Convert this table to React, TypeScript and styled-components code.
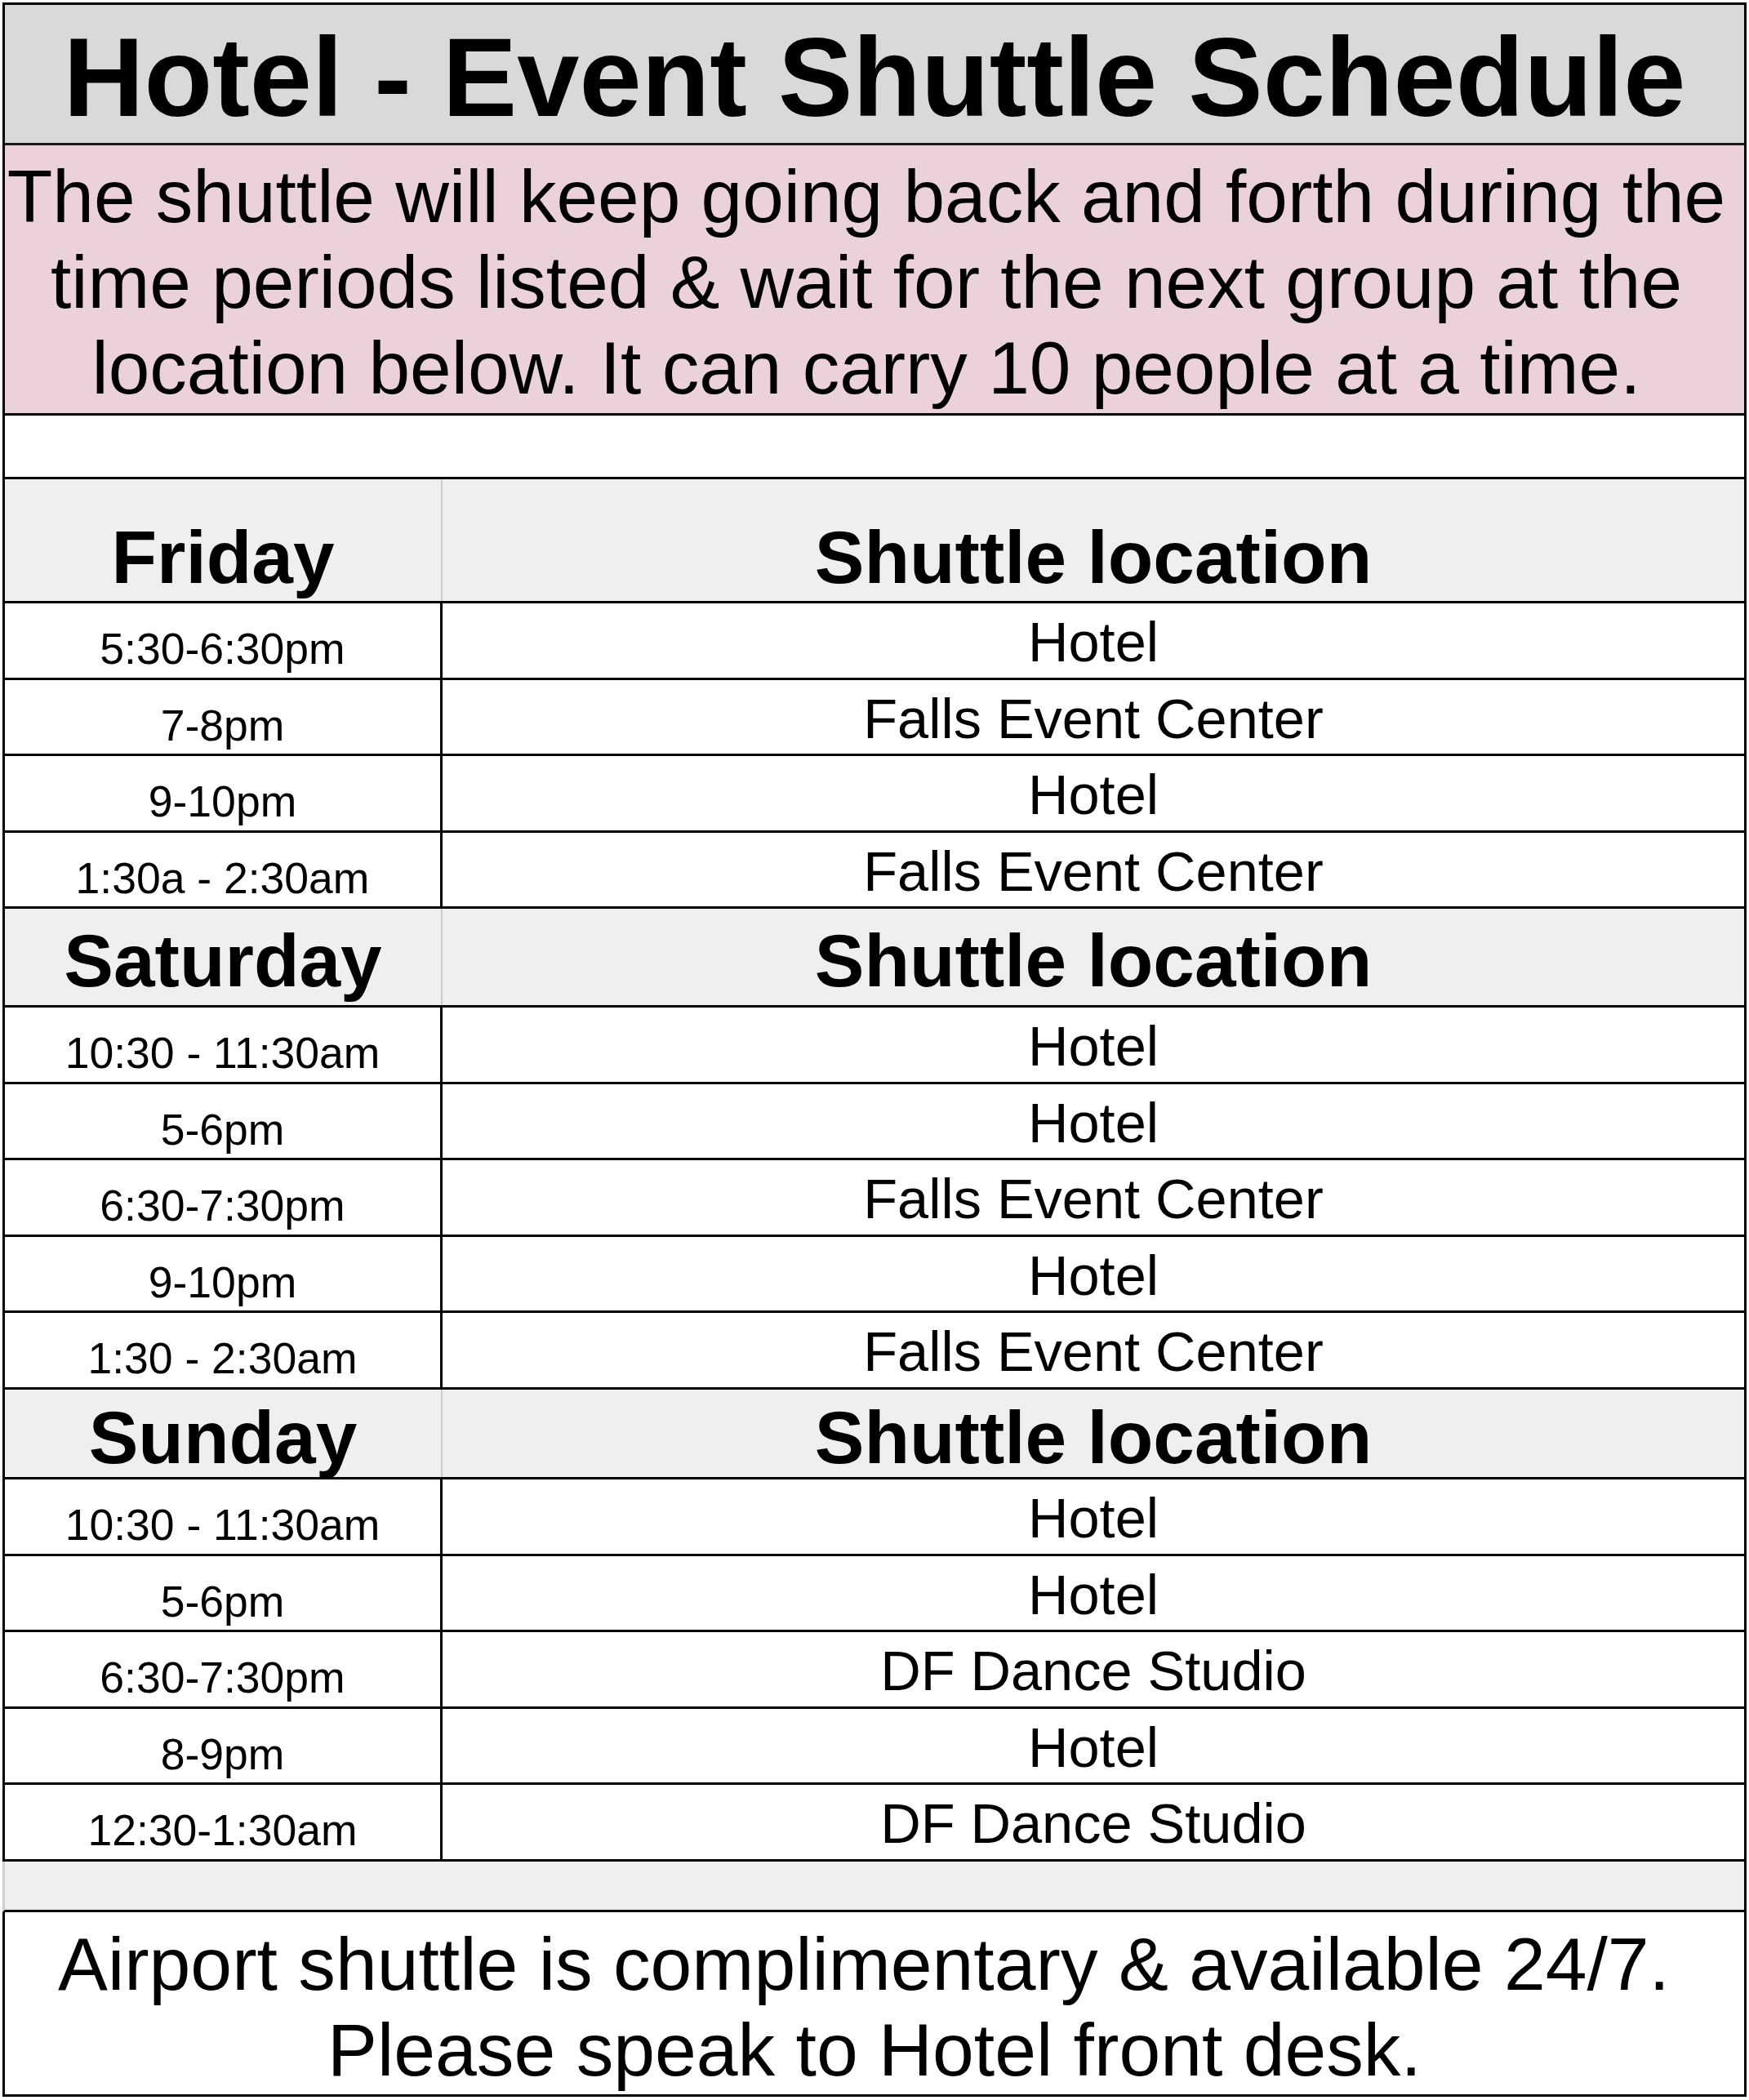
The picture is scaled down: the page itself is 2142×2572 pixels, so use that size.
import React from "react";
import styled, { createGlobalStyle } from "styled-components";

const GlobalStyle = createGlobalStyle`
  html, body {
    margin: 0;
    padding: 0;
    background: #ffffff;
  }
  body {
    font-family: "Liberation Sans", Arial, Helvetica, sans-serif;
    color: #000000;
  }
  * { box-sizing: border-box; }
`;

const Sheet = styled.div`
  margin: 3px 0 0 3px;
  width: 2136px;
  border: 3px solid #000000;
  display: flex;
  flex-direction: column;
  background: #ffffff;
`;

const TitleRow = styled.div`
  height: 172px;
  background: #d9d9d9;
  border-bottom: 3px solid #1a1a1a;
  display: flex;
  align-items: flex-end;
  justify-content: center;
  padding-bottom: 12px;
  font-size: 137px;
  font-weight: 700;
  line-height: 1;
  white-space: nowrap;
`;

const DescRow = styled.div`
  height: 331px;
  background: #ead1dc;
  border-bottom: 3px solid #000000;
  display: flex;
  flex-direction: column;
  align-items: center;
  justify-content: flex-end;
  padding: 0 20px 3px 0;
  font-size: 91px;
  line-height: 105px;
  white-space: nowrap;
  overflow: visible;
`;

const Line = styled.span<{ $shift?: number }>`
  display: block;
  margin-right: ${(p) => (p.$shift ? p.$shift * 2 : 0)}px;
`;

const BlankRow = styled.div`
  height: 78px;
  border-bottom: 3px solid #000000;
`;

const HeaderRow = styled.div<{ $h: number }>`
  height: ${(p) => p.$h}px;
  background: #efefef;
  border-bottom: 3px solid #000000;
  display: grid;
  grid-template-columns: 536px 1fr;
`;

const HeaderCell = styled.div<{ $pad: number; $divider?: boolean }>`
  display: flex;
  align-items: flex-end;
  justify-content: center;
  padding-bottom: ${(p) => p.$pad}px;
  font-size: 91px;
  font-weight: 700;
  line-height: 1;
  white-space: nowrap;
  border-right: ${(p) => (p.$divider ? "2px solid #cdcdcd" : "none")};
`;

const DataRow = styled.div`
  height: 93.5px;
  border-bottom: 3px solid #000000;
  display: grid;
  grid-template-columns: 536px 1fr;
`;

const TimeCell = styled.div`
  display: flex;
  align-items: flex-end;
  justify-content: center;
  padding-bottom: 8px;
  font-size: 53.5px;
  line-height: 1;
  white-space: nowrap;
  border-right: 3px solid #000000;
`;

const PlaceCell = styled.div`
  display: flex;
  align-items: flex-end;
  justify-content: center;
  padding-bottom: 8px;
  font-size: 68.5px;
  line-height: 1;
  white-space: nowrap;
`;

const GapRow = styled.div`
  height: 62.5px;
  background: #efefef;
  border-bottom: 3px solid #000000;
  margin-left: -3px;
  border-left: 3px solid #cfcfcf;
`;

const FooterRow = styled.div`
  height: 223px;
  display: flex;
  flex-direction: column;
  align-items: center;
  justify-content: flex-end;
  padding-bottom: 2px;
  font-size: 91.3px;
  line-height: 105px;
  white-space: nowrap;
`;

type Trip = { time: string; place: string };
type Day = { name: string; height: number; pad: number; trips: Trip[] };

const days: Day[] = [
  {
    name: "Friday",
    height: 152,
    pad: 8,
    trips: [
      { time: "5:30-6:30pm", place: "Hotel" },
      { time: "7-8pm", place: "Falls Event Center" },
      { time: "9-10pm", place: "Hotel" },
      { time: "1:30a - 2:30am", place: "Falls Event Center" },
    ],
  },
  {
    name: "Saturday",
    height: 121,
    pad: 9,
    trips: [
      { time: "10:30 - 11:30am", place: "Hotel" },
      { time: "5-6pm", place: "Hotel" },
      { time: "6:30-7:30pm", place: "Falls Event Center" },
      { time: "9-10pm", place: "Hotel" },
      { time: "1:30 - 2:30am", place: "Falls Event Center" },
    ],
  },
  {
    name: "Sunday",
    height: 110.5,
    pad: 3,
    trips: [
      { time: "10:30 - 11:30am", place: "Hotel" },
      { time: "5-6pm", place: "Hotel" },
      { time: "6:30-7:30pm", place: "DF Dance Studio" },
      { time: "8-9pm", place: "Hotel" },
      { time: "12:30-1:30am", place: "DF Dance Studio" },
    ],
  },
];

export default function App() {
  return (
    <>
      <GlobalStyle />
      <Sheet>
        <TitleRow>Hotel - Event Shuttle Schedule</TitleRow>
        <DescRow>
          <Line>The shuttle will keep going back and forth during the</Line>
          <Line>time periods listed &amp; wait for the next group at the</Line>
          <Line>location below. It can carry 10 people at a time.</Line>
        </DescRow>
        <BlankRow />
        {days.map((day) => (
          <React.Fragment key={day.name}>
            <HeaderRow $h={day.height}>
              <HeaderCell $pad={day.pad} $divider>
                {day.name}
              </HeaderCell>
              <HeaderCell $pad={day.pad}>Shuttle location</HeaderCell>
            </HeaderRow>
            {day.trips.map((t, i) => (
              <DataRow key={i}>
                <TimeCell>{t.time}</TimeCell>
                <PlaceCell>{t.place}</PlaceCell>
              </DataRow>
            ))}
          </React.Fragment>
        ))}
        <GapRow />
        <FooterRow>
          <Line $shift={13}>Airport shuttle is complimentary &amp; available 24/7.</Line>
          <Line>Please speak to Hotel front desk.</Line>
        </FooterRow>
      </Sheet>
    </>
  );
}
